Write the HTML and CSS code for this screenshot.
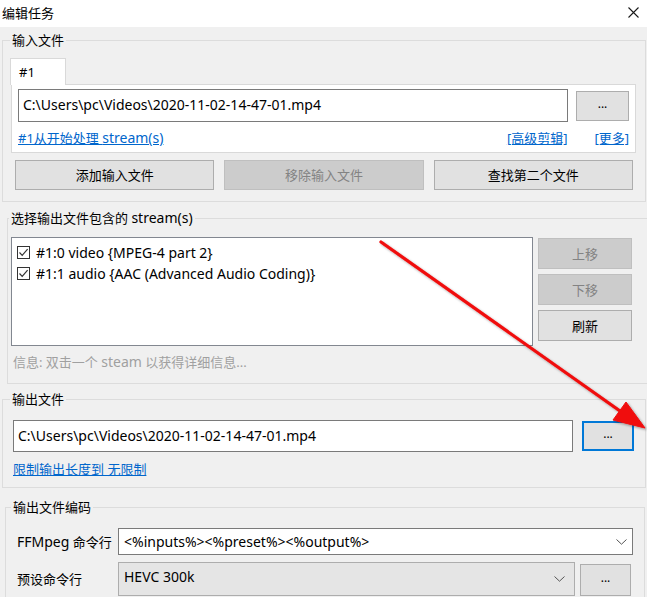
FILE: index.html
```html
<!DOCTYPE html>
<html lang="zh-CN">
  <head>
    <meta charset="UTF-8" />
    <meta name="viewport" content="width=device-width, initial-scale=1.0" />
    <title>编辑任务</title>
    <link rel="stylesheet" href="styles.css">
  </head>
  <body>
    <div class="titlebar">
      <span class="title">编辑任务</span>
      <svg class="close" width="11" height="11" viewBox="0 0 11 11">
        <path d="M0.5 0.5 L10.5 10.5 M10.5 0.5 L0.5 10.5" stroke="#1a1a1a" stroke-width="1.1" fill="none" />
      </svg>
    </div>

    <div class="dialog">
      <fieldset class="group g-input">
        <legend>输入文件</legend>
        <div class="tabs">
          <div class="tab">#1</div>
        </div>
        <div class="tab-panel">
          <div class="file-row">
            <div class="textbox">C:\Users\pc\Videos\2020-11-02-14-47-01.mp4</div>
            <button class="btn btn-browse">...</button>
          </div>
          <div class="link-row">
            <a class="link">#1从开始处理 <span class="latin">stream(s)</span></a>
            <a class="link link-trim">[高级剪辑]</a>
            <a class="link link-more">[更多]</a>
          </div>
        </div>
        <div class="btn-row">
          <button class="btn btn-wide">添加输入文件</button>
          <button class="btn btn-wide" disabled>移除输入文件</button>
          <button class="btn btn-wide">查找第二个文件</button>
        </div>
      </fieldset>

      <fieldset class="group g-streams">
        <legend>选择输出文件包含的 <span class="latin">stream(s)</span></legend>
        <div class="stream-row">
          <div class="listbox">
            <div class="list-item">
              <span class="checkbox"><svg width="11" height="11" viewBox="0 0 11 11"><path d="M1.5 5.5 L4.2 8.3 L9.6 2.2" stroke="#333" stroke-width="1.2" fill="none" /></svg></span>
              #1:0 video {MPEG-4 part 2}
            </div>
            <div class="list-item">
              <span class="checkbox"><svg width="11" height="11" viewBox="0 0 11 11"><path d="M1.5 5.5 L4.2 8.3 L9.6 2.2" stroke="#333" stroke-width="1.2" fill="none" /></svg></span>
              #1:1 audio {AAC (Advanced Audio Coding)}
            </div>
          </div>
          <div class="side-btns">
            <button class="btn btn-side" disabled>上移</button>
            <button class="btn btn-side" disabled>下移</button>
            <button class="btn btn-side">刷新</button>
          </div>
        </div>
        <p class="info">信息: 双击一个 <span class="latin">steam</span> 以获得详细信息...</p>
      </fieldset>

      <fieldset class="group g-output">
        <legend>输出文件</legend>
        <div class="file-row">
          <div class="textbox">C:\Users\pc\Videos\2020-11-02-14-47-01.mp4</div>
          <button class="btn btn-browse focused">...</button>
        </div>
        <div class="link-row">
          <a class="link">限制输出长度到 无限制</a>
        </div>
      </fieldset>

      <fieldset class="group g-encode">
        <legend>输出文件编码</legend>
        <div class="form-row">
          <span class="label"><span class="latin">FFMpeg</span> 命令行</span>
          <div class="combo combo-edit">
            <span class="latin">&lt;%inputs%&gt;&lt;%preset%&gt;&lt;%output%&gt;</span>
            <svg class="chevron" width="11" height="6" viewBox="0 0 11 6"><path d="M0.5 0.5 L5.5 5.2 L10.5 0.5" stroke="#555" stroke-width="1" fill="none" /></svg>
          </div>
        </div>
        <div class="form-row">
          <span class="label">预设命令行</span>
          <div class="combo combo-list">
            <span class="latin">HEVC 300k</span>
            <svg class="chevron" width="11" height="6" viewBox="0 0 11 6"><path d="M0.5 0.5 L5.5 5.2 L10.5 0.5" stroke="#555" stroke-width="1" fill="none" /></svg>
          </div>
          <button class="btn btn-browse">...</button>
        </div>
      </fieldset>
    </div>

    <svg class="annotation" width="647" height="597" viewBox="0 0 647 597">
      <defs>
        <filter id="shade" x="-10%" y="-10%" width="120%" height="120%">
          <feDropShadow dx="1.5" dy="1.5" stdDeviation="1.2" flood-color="#000" flood-opacity="0.35" />
        </filter>
      </defs>
      <g filter="url(#shade)" fill="#f00a0a" stroke="#f00a0a">
        <line x1="381" y1="242" x2="620" y2="411" stroke-width="3.2" stroke-linecap="round" />
        <polygon points="645,428 613,420 626,402" stroke-width="1" stroke-linejoin="round" />
      </g>
    </svg>
  </body>
</html>
```

FILE: styles.css
```css
* {
  box-sizing: border-box;
}

body {
  margin: 0;
  width: 647px;
  height: 597px;
  overflow: hidden;
  position: relative;
  background: #f0f0f0;
  font-family: "Noto Sans", "Noto Sans CJK SC", sans-serif;
  font-size: 13px;
  line-height: 18px;
  color: #000;
}

.latin {
  font-size: 14px;
}

.titlebar {
  height: 27px;
  background: #fff;
  display: flex;
  align-items: center;
  justify-content: space-between;
  padding: 0 8px 2px 2px;
}

.title {
  font-size: 13px;
}

.dialog {
  display: flex;
  flex-direction: column;
}

.group {
  border: 1px solid #dcdcdc;
  margin: 0;
  min-width: 0;
}

.group legend {
  padding: 0 2px;
  line-height: 18px;
}

.g-input {
  margin: 4px 1px 0 2px;
  padding: 9px 9px 11px 7px;
}

.g-streams {
  margin: 7px -3px 0 7px;
  padding: 10px 17px 12px 3px;
}

.g-streams legend {
  margin-left: -2px;
}

.g-output {
  margin: 6px 1px 0 2px;
  padding: 12px 11px 9px 10px;
}

.g-output legend {
  margin-left: -3px;
}

.g-encode {
  margin: 10px 2px 0 5px;
  padding: 12px 11px 0 10px;
}

.g-encode legend {
  margin-left: -5px;
}

/* tabs */
.tabs {
  display: flex;
}

.tab {
  width: 56px;
  height: 27px;
  margin-bottom: -1px;
  padding: 4px 0 0 8px;
  background: #fff;
  border: 1px solid #d9d9d9;
  border-bottom: none;
  position: relative;
}

.tab-panel {
  margin-left: 1px;
  background: #fff;
  border: 1px solid #d9d9d9;
  padding: 4px 6px 5px 6px;
}

.file-row {
  display: flex;
  align-items: center;
  gap: 8px;
}

.g-output .file-row {
  gap: 9px;
}

.textbox {
  flex: 1;
  height: 33px;
  border: 1px solid #7a7a7a;
  background: #fff;
  padding: 6px 4px;
  font-size: 14px;
  white-space: nowrap;
}

.g-output .textbox {
  height: 32px;
}

.link-row {
  display: flex;
  margin-top: 7px;
  gap: 27px;
}

.g-output .link-row {
  margin-top: 8px;
}

.link {
  color: #0066cc;
  text-decoration: underline;
}

.link-trim {
  margin-left: auto;
}

/* buttons */
.btn {
  font: inherit;
  color: #000;
  background: #e1e1e1;
  border: 1px solid #adadad;
  padding: 0;
  height: 30px;
}

.btn:disabled {
  background: #cccccc;
  border-color: #bfbfbf;
  color: #838383;
}

.btn-browse {
  width: 53px;
  font-size: 12px;
  line-height: 12px;
  padding-bottom: 4px;
}

.btn-browse.focused {
  width: 52px;
  border: 2px solid #0078d7;
}

.btn-row {
  display: flex;
  gap: 10px;
  margin: 7px 3px 0 5px;
}

.btn-wide {
  flex: 1;
}

/* streams */
.stream-row {
  display: flex;
  gap: 5px;
}

.listbox {
  flex: 1;
  height: 109px;
  background: #fff;
  border: 1px solid #828790;
  padding: 4px 4px;
}

.list-item {
  display: flex;
  align-items: center;
  height: 21px;
  gap: 6px;
  padding-left: 1px;
  font-size: 14px;
  white-space: nowrap;
}

.checkbox {
  width: 13px;
  height: 13px;
  border: 1px solid #333;
  background: #fff;
  display: flex;
  align-items: center;
  justify-content: center;
  flex: none;
}

.side-btns {
  width: 94px;
  margin-top: 1px;
  display: flex;
  flex-direction: column;
  gap: 5px;
}

.btn-side {
  height: 31px;
}

.info {
  margin: 7px 0 0 2px;
  color: #a0a0a0;
}

/* encoding */
.form-row {
  display: flex;
  align-items: center;
  gap: 5px;
  margin-bottom: 7px;
}

.label {
  width: 102px;
  flex: none;
  padding-left: 1px;
  margin-right: -5px;
}

.combo {
  flex: 1;
  height: 27px;
  display: flex;
  align-items: center;
  justify-content: space-between;
  padding: 0 5px 0 5px;
  border: 1px solid #7a7a7a;
  background: #fff;
  white-space: nowrap;
}

.combo-list {
  height: 34px;
  align-items: flex-start;
  padding-top: 5px;
  background: #e5e5e5;
  border-color: #adadad;
}

.combo-list .chevron {
  margin-top: 8px;
  margin-right: 4px;
}

.form-row .btn-browse {
  height: 32px;
  width: 51px;
  margin: 2px 2px 0 0;
  align-self: flex-start;
}

.annotation {
  position: absolute;
  top: 0;
  left: 0;
  pointer-events: none;
}
```
